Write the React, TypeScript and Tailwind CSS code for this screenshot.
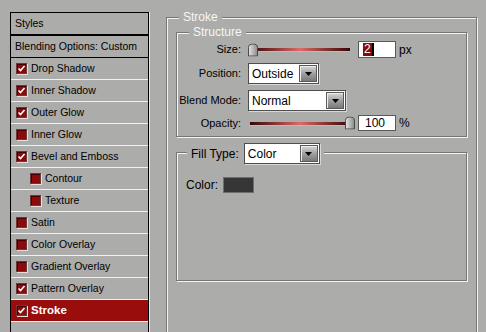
import React from 'react'

const font = { fontFamily: '"Liberation Sans", Arial, sans-serif' }

const effects = [
  { label: 'Drop Shadow', checked: true },
  { label: 'Inner Shadow', checked: true },
  { label: 'Outer Glow', checked: true },
  { label: 'Inner Glow', checked: false },
  { label: 'Bevel and Emboss', checked: true },
  { label: 'Contour', checked: false, sub: true },
  { label: 'Texture', checked: false, sub: true },
  { label: 'Satin', checked: false },
  { label: 'Color Overlay', checked: false },
  { label: 'Gradient Overlay', checked: false },
  { label: 'Pattern Overlay', checked: true },
  { label: 'Stroke', checked: true, active: true },
]

function Check({ checked }: { checked: boolean }) {
  return (
    <div className="w-[11px] h-[11px] border border-[#6a3a3a] bg-[#8c0a0a] shadow-[inset_1px_1px_0_#4a0000,1px_1px_0_#e8dede] flex items-center justify-center shrink-0">
      {checked && (
        <svg width="9" height="9" viewBox="0 0 9 9">
          <path d="M1.5 4.5 L3.5 6.5 L7.5 2" stroke="#fff" strokeWidth="1.6" fill="none" />
        </svg>
      )}
    </div>
  )
}

function Arrow() {
  return (
    <div className="w-[18px] self-stretch my-[1px] mr-[1px] border border-[#5a5a5a] bg-gradient-to-b from-[#d8d8d8] via-[#a0a0a0] to-[#7a7a7a] shadow-[inset_1px_1px_0_#eee] flex items-center justify-center">
      <svg width="9" height="6" viewBox="0 0 9 6">
        <path d="M1 1 H8 L4.5 5 Z" fill="#000" />
      </svg>
    </div>
  )
}

function Select({ value, w }: { value: string; w: string }) {
  return (
    <div className={`${w} h-[21px] flex bg-white border border-[#4e4e4e] shadow-[1px_1px_0_#d8d8d8]`}>
      <div className="flex-1 flex items-center pl-[3px] text-[12px] text-black">{value}</div>
      <Arrow />
    </div>
  )
}

function Thumb() {
  return (
    <svg width="10" height="13" viewBox="0 0 10 13" className="absolute top-1/2 -translate-y-1/2">
      <defs>
        <linearGradient id="tg" x1="0" x2="1">
          <stop offset="0" stopColor="#e4e4e4" />
          <stop offset="1" stopColor="#8a8a8a" />
        </linearGradient>
      </defs>
      <path d="M0.5 12.5 V4 Q0.5 0.5 5 0.5 Q9.5 0.5 9.5 4 V12.5 Z" fill="url(#tg)" stroke="#4a4a4a" />
    </svg>
  )
}

function Slider({ at }: { at: 'start' | 'end' }) {
  return (
    <div className="relative w-[106px] h-[14px] flex items-center">
      <div className="ml-[2px] w-[100px] h-[3px] bg-gradient-to-r from-[#3a0606] via-[#e06a6a] to-[#3a0606] shadow-[0_1px_0_#d0b0b0]" />
      <div className={at === 'start' ? 'absolute left-0 top-0 h-full' : 'absolute left-[97px] top-0 h-full'}>
        <Thumb />
      </div>
    </div>
  )
}

export default function App() {
  return (
    <div className="w-[486px] h-[332px] overflow-hidden bg-[#acacaa] flex text-[11px] text-black" style={font}>
      {/* Styles list */}
      <div className="ml-[10px] mt-[12px] w-[139px] shrink-0 border-x border-t border-black flex flex-col self-start shadow-[1px_0_0_#e8e8e8] text-[10.5px]">
        <div className="h-[21px] flex items-center pl-[4px] pt-[1px]">Styles</div>
        <div className="border-t border-black h-[1px] bg-[#e8e8e8]" />
        <div className="border-t border-black h-[22px] flex items-center pl-[4px] pt-[1px]">Blending Options: Custom</div>
        <div className="border-t border-black" />
        {effects.map((e) => (
          <div key={e.label} className="flex flex-col">
            <div
              className={`h-[21px] flex items-center gap-[4px] ${e.sub ? 'pl-[19px]' : 'pl-[5px]'} ${e.active ? 'bg-[#990d0d] text-white font-bold text-[11.5px]' : ''}`}
            >
              <Check checked={e.checked} />
              <span className="pt-[1px]">{e.label}</span>
            </div>
            <div className="h-[1px] bg-[#f0f0f0]" />
          </div>
        ))}
        <div className="h-[40px]" />
      </div>

      {/* Stroke group */}
      <div className="ml-[17px] mt-[17px] w-[311px] h-[340px] shrink-0 border border-[#767676] shadow-[inset_1px_1px_0_#f4f4f4,1px_1px_0_#f4f4f4] relative px-[9px] pt-[14px]">
        <div className="absolute -top-[8px] left-[12px] px-[4px] bg-[#acacaa] text-[#f6f6f6] text-[12px] leading-[14px]">Stroke</div>

        {/* Structure */}
        <div className="h-[105px] border border-[#767676] shadow-[inset_1px_1px_0_#f4f4f4,1px_1px_0_#f4f4f4] relative pt-[8px] pl-[1px]">
          <div className="absolute -top-[8px] left-[12px] px-[4px] bg-[#acacaa] text-[#f6f6f6] text-[12px] leading-[14px]">Structure</div>
          <div className="flex flex-col gap-[4px]">
            <div className="flex items-center h-[17px]">
              <div className="w-[64px] text-right pr-[1px]">Size:</div>
              <div className="ml-[6px]"><Slider at="start" /></div>
              <div className="ml-[4px] w-[38px] h-[17px] bg-white border border-[#5a5a5a] flex items-center pl-[4px]">
                <span className="bg-[#8a0a0a] text-white text-[12px] leading-[13px] px-[1px] border-r-2 border-black">2</span>
              </div>
              <div className="ml-[3px] text-[12px]">px</div>
            </div>
            <div className="flex items-center h-[21px] mt-[1px]">
              <div className="w-[64px] text-right pr-[1px]">Position:</div>
              <div className="ml-[6px]"><Select value="Outside" w="w-[71px]" /></div>
            </div>
            <div className="flex items-center h-[21px] mt-[2px]">
              <div className="w-[64px] text-right pr-[1px]">Blend Mode:</div>
              <div className="ml-[6px]"><Select value="Normal" w="w-[98px]" /></div>
            </div>
            <div className="flex items-center h-[16px]">
              <div className="w-[64px] text-right pr-[1px]">Opacity:</div>
              <div className="ml-[6px]"><Slider at="end" /></div>
              <div className="ml-[4px] w-[38px] h-[16px] bg-white border border-[#5a5a5a] flex items-center pl-[6px] text-[12px]">100</div>
              <div className="ml-[3px] text-[12px]">%</div>
            </div>
          </div>
        </div>

        {/* Fill */}
        <div className="mt-[15px] h-[129px] border border-[#767676] shadow-[inset_1px_1px_0_#f4f4f4,1px_1px_0_#f4f4f4] relative pt-[23px] pl-[9px]">
          <div className="absolute -top-[10px] left-[10px] px-[4px] bg-[#acacaa] flex items-center gap-[5px]">
            <span className="text-[12px]">Fill Type:</span>
            <Select value="Color" w="w-[76px]" />
          </div>
          <div className="flex items-center gap-[5px]">
            <span className="text-[12px]">Color:</span>
            <div className="w-[31px] h-[16px] bg-[#363636] border border-[#6e6e6e]" />
          </div>
        </div>
      </div>
    </div>
  )
}
